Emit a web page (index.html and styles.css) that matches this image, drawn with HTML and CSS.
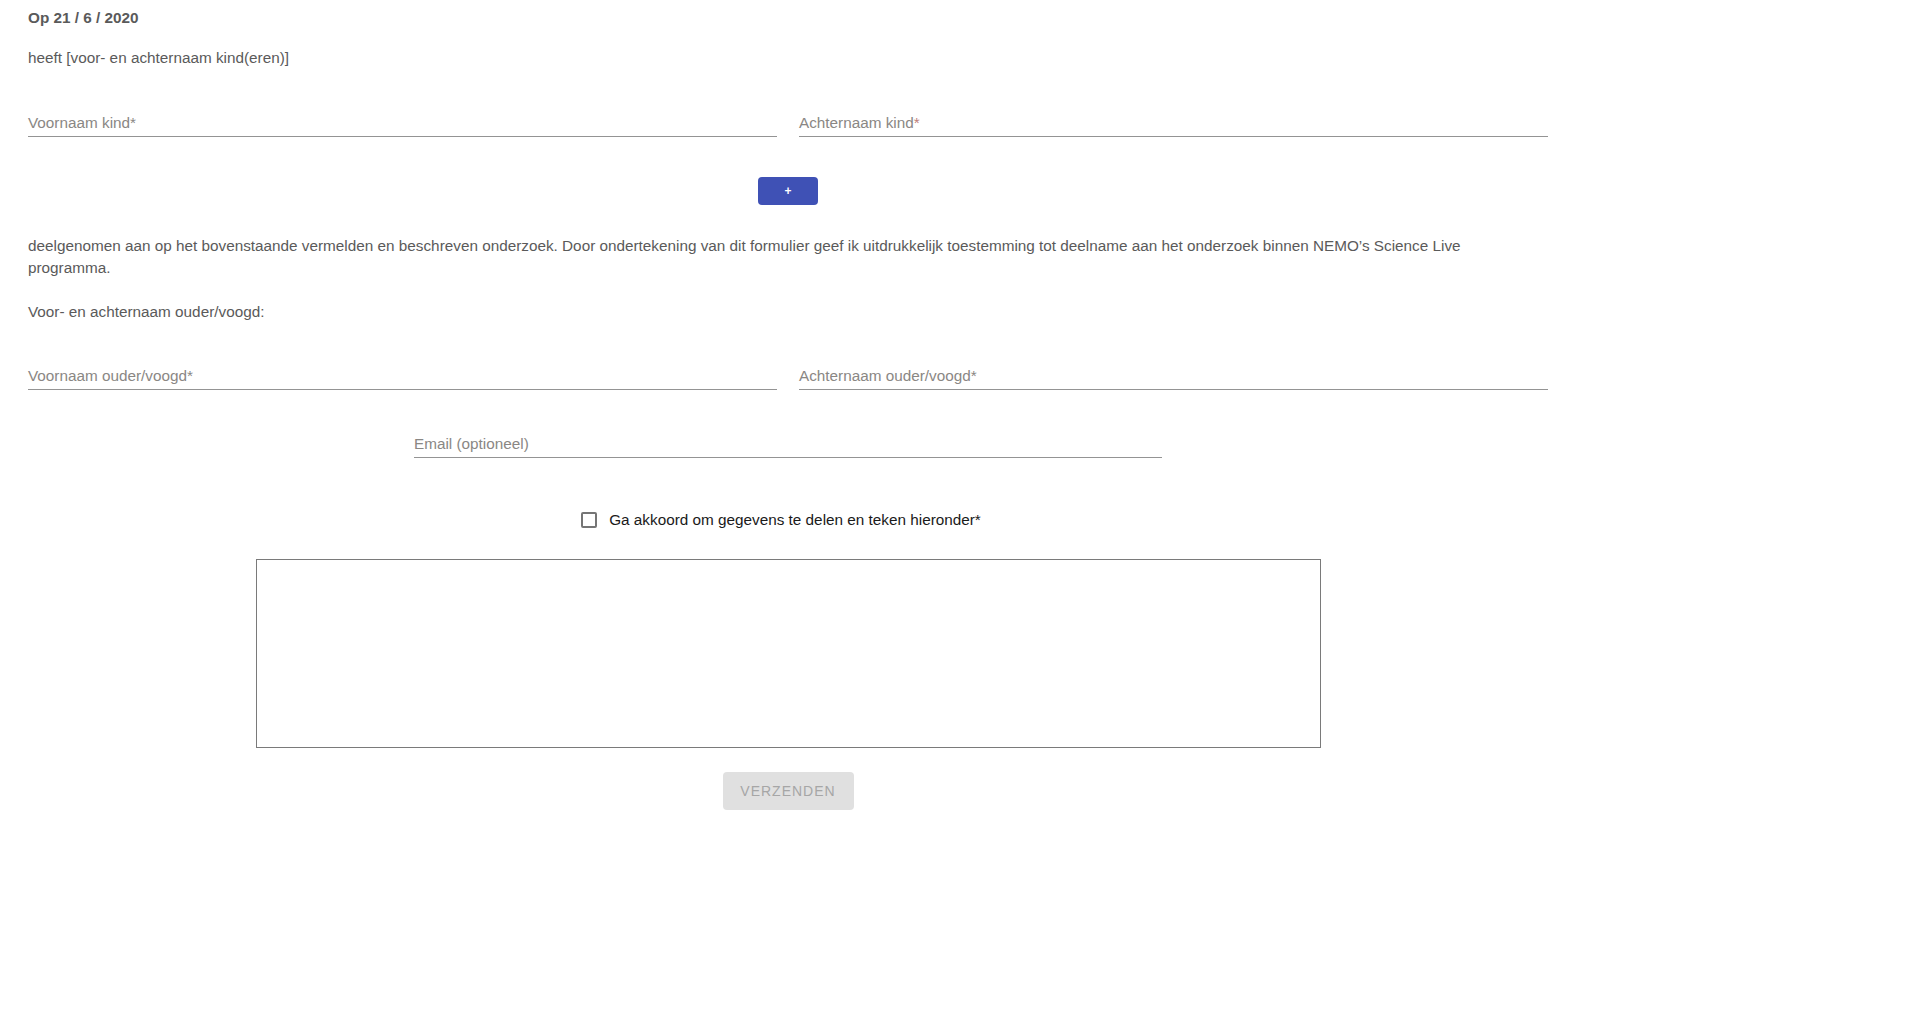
FILE: index.html
```html
<!DOCTYPE html>
<html lang="nl">
<head>
<meta charset="utf-8">
<title>Toestemming</title>
<link rel="stylesheet" href="styles.css">
</head>
<body>
<main class="page">
  <p class="date">Op 21 / 6 / 2020</p>
  <p class="intro">heeft [voor- en achternaam kind(eren)]</p>

  <div class="row row-kind">
    <label class="field"><span class="label">Voornaam kind<span class="req">*</span></span></label>
    <label class="field"><span class="label">Achternaam kind<span class="req">*</span></span></label>
  </div>

  <div class="add-wrap">
    <button class="add-btn" type="button">+</button>
  </div>

  <p class="body-text">deelgenomen aan op het bovenstaande vermelden en beschreven onderzoek. Door ondertekening van dit formulier geef ik uitdrukkelijk toestemming tot deelname aan het onderzoek binnen NEMO’s Science Live programma.</p>

  <p class="parent-title">Voor- en achternaam ouder/voogd:</p>

  <div class="row row-parent">
    <label class="field"><span class="label">Voornaam ouder/voogd<span class="req">*</span></span></label>
    <label class="field"><span class="label">Achternaam ouder/voogd<span class="req">*</span></span></label>
  </div>

  <div class="email-wrap">
    <label class="field email"><span class="label">Email (optioneel)</span></label>
  </div>

  <div class="agree-wrap">
    <label class="agree"><span class="checkbox"></span><span class="agree-text">Ga akkoord om gegevens te delen en teken hieronder*</span></label>
  </div>

  <div class="sig-wrap">
    <div class="signature"></div>
  </div>

  <div class="submit-wrap">
    <button class="submit" type="button" disabled>Verzenden</button>
  </div>
</main>
</body>
</html>
```

FILE: styles.css
```css
html, body {
  margin: 0;
  padding: 0;
  background: #ffffff;
}

body {
  font-family: "Liberation Sans", Arial, sans-serif;
  font-size: 15.3px;
  color: #5a5a5a;
}

.page {
  width: 1520px;
  padding: 8px 0 0 28px;
}

p {
  margin: 0;
}

.date {
  font-weight: bold;
  line-height: 20px;
}

.intro {
  margin-top: 20px;
  line-height: 20px;
}

.row {
  display: flex;
  gap: 22px;
}

.row-kind {
  margin-top: 45px;
}

.row-parent {
  margin-top: 43px;
}

.field {
  display: block;
  flex: 1;
  border-bottom: 1px solid #949494;
  padding-bottom: 3px;
  line-height: 20px;
}

.label {
  color: #8a8784;
  font-size: 15.3px;
}

.req {
  color: #8a8784;
}

.row-kind .field:last-child .req {
  color: #c0807a;
}

.add-wrap {
  display: flex;
  justify-content: center;
  margin-top: 40px;
}

.add-btn {
  width: 60px;
  height: 28px;
  border: none;
  border-radius: 4px;
  background: #3f51b5;
  color: #ffffff;
  font-family: "Liberation Sans", Arial, sans-serif;
  font-size: 12px;
  font-weight: bold;
  padding: 0;
  line-height: 28px;
}

.body-text {
  margin-top: 30px;
  line-height: 22px;
  width: 1470px;
}

.parent-title {
  margin-top: 22px;
  line-height: 22px;
}

.email-wrap {
  display: flex;
  justify-content: center;
  margin-top: 44px;
}

.email {
  flex: none;
  width: 748px;
}

.agree-wrap {
  display: flex;
  justify-content: center;
  margin-top: 52px;
}

.agree {
  display: flex;
  align-items: center;
  gap: 12px;
  line-height: 20px;
  margin-right: 14px;
}

.checkbox {
  width: 12px;
  height: 12px;
  border: 2px solid #757575;
  border-radius: 2px;
}

.agree-text {
  color: #1a1a1a;
  font-size: 15.3px;
}

.sig-wrap {
  display: flex;
  justify-content: center;
  margin-top: 29px;
}

.signature {
  width: 1063px;
  height: 187px;
  border: 1px solid #7a7a7a;
}

.submit-wrap {
  display: flex;
  justify-content: center;
  margin-top: 24px;
}

.submit {
  width: 131px;
  height: 38px;
  border: none;
  border-radius: 4px;
  background: #e0e0e0;
  color: #a6a6a6;
  font-family: "Liberation Sans", Arial, sans-serif;
  font-size: 14px;
  text-transform: uppercase;
  letter-spacing: 1px;
  padding: 0;
}
```
